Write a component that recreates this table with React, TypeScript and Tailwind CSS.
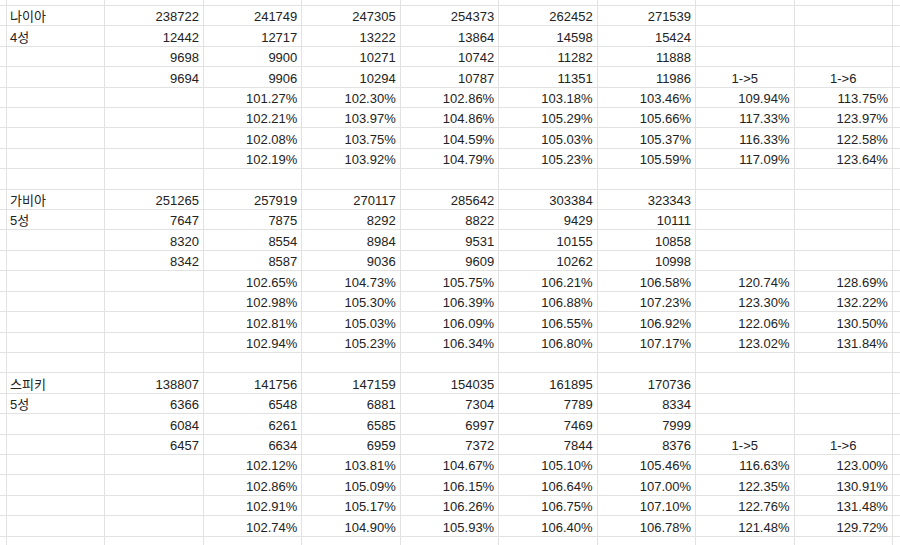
import React from 'react';

type Row = string[];

// each row: [label, c1..c8]  (9 visible columns)
const ROWS: Row[] = [
  ['나이아', '238722', '241749', '247305', '254373', '262452', '271539', '', ''],
  ['4성', '12442', '12717', '13222', '13864', '14598', '15424', '', ''],
  ['', '9698', '9900', '10271', '10742', '11282', '11888', '', ''],
  ['', '9694', '9906', '10294', '10787', '11351', '11986', '1->5', '1->6'],
  ['', '', '101.27%', '102.30%', '102.86%', '103.18%', '103.46%', '109.94%', '113.75%'],
  ['', '', '102.21%', '103.97%', '104.86%', '105.29%', '105.66%', '117.33%', '123.97%'],
  ['', '', '102.08%', '103.75%', '104.59%', '105.03%', '105.37%', '116.33%', '122.58%'],
  ['', '', '102.19%', '103.92%', '104.79%', '105.23%', '105.59%', '117.09%', '123.64%'],
  ['', '', '', '', '', '', '', '', ''],
  ['가비아', '251265', '257919', '270117', '285642', '303384', '323343', '', ''],
  ['5성', '7647', '7875', '8292', '8822', '9429', '10111', '', ''],
  ['', '8320', '8554', '8984', '9531', '10155', '10858', '', ''],
  ['', '8342', '8587', '9036', '9609', '10262', '10998', '', ''],
  ['', '', '102.65%', '104.73%', '105.75%', '106.21%', '106.58%', '120.74%', '128.69%'],
  ['', '', '102.98%', '105.30%', '106.39%', '106.88%', '107.23%', '123.30%', '132.22%'],
  ['', '', '102.81%', '105.03%', '106.09%', '106.55%', '106.92%', '122.06%', '130.50%'],
  ['', '', '102.94%', '105.23%', '106.34%', '106.80%', '107.17%', '123.02%', '131.84%'],
  ['', '', '', '', '', '', '', '', ''],
  ['스피키', '138807', '141756', '147159', '154035', '161895', '170736', '', ''],
  ['5성', '6366', '6548', '6881', '7304', '7789', '8334', '', ''],
  ['', '6084', '6261', '6585', '6997', '7469', '7999', '', ''],
  ['', '6457', '6634', '6959', '7372', '7844', '8376', '1->5', '1->6'],
  ['', '', '102.12%', '103.81%', '104.67%', '105.10%', '105.46%', '116.63%', '123.00%'],
  ['', '', '102.86%', '105.09%', '106.15%', '106.64%', '107.00%', '122.35%', '130.91%'],
  ['', '', '102.91%', '105.17%', '106.26%', '106.75%', '107.10%', '122.76%', '131.48%'],
  ['', '', '102.74%', '104.90%', '105.93%', '106.40%', '106.78%', '121.48%', '129.72%'],
];

const Cell: React.FC<{ text?: string; col: number }> = ({ text = '', col }) => {
  const isArrow = text.startsWith('1->');
  const align = col === 0 ? 'justify-start pl-[3px]' : isArrow ? 'justify-center' : 'justify-end pr-[4px]';
  return (
    <div
      className={`flex items-end ${align} pb-[2px] border-r border-b border-[#e2e2e2] overflow-hidden whitespace-nowrap`}
    >
      {text}
    </div>
  );
};

export default function App() {
  const blankRow = Array.from({ length: 9 }, () => '');
  return (
    <div
      className="w-[900px] h-[545px] overflow-hidden bg-white text-[13px] leading-none text-[#222222]"
      style={{ fontFamily: '"Liberation Sans", Arial, "Noto Sans CJK KR", sans-serif' }}
    >
      <div className="grid grid-cols-[7px_repeat(9,98.44px)_1fr] grid-rows-[6px_repeat(26,20.42px)_1fr] h-full">
        {/* partial top row */}
        <div className="border-r border-b border-[#e2e2e2]" />
        {blankRow.map((_, i) => (
          <div key={`t${i}`} className="border-r border-b border-[#e2e2e2]" />
        ))}
        <div className="border-b border-[#e2e2e2]" />

        {ROWS.map((row, r) => (
          <React.Fragment key={r}>
            <div className="border-r border-b border-[#e2e2e2]" />
            {row.map((text, c) => (
              <Cell key={c} text={text} col={c} />
            ))}
            <div className="border-b border-[#e2e2e2]" />
          </React.Fragment>
        ))}

        {/* partial bottom row */}
        <div className="border-r border-[#e2e2e2]" />
        {blankRow.map((_, i) => (
          <div key={`b${i}`} className="border-r border-[#e2e2e2]" />
        ))}
        <div />
      </div>
    </div>
  );
}
